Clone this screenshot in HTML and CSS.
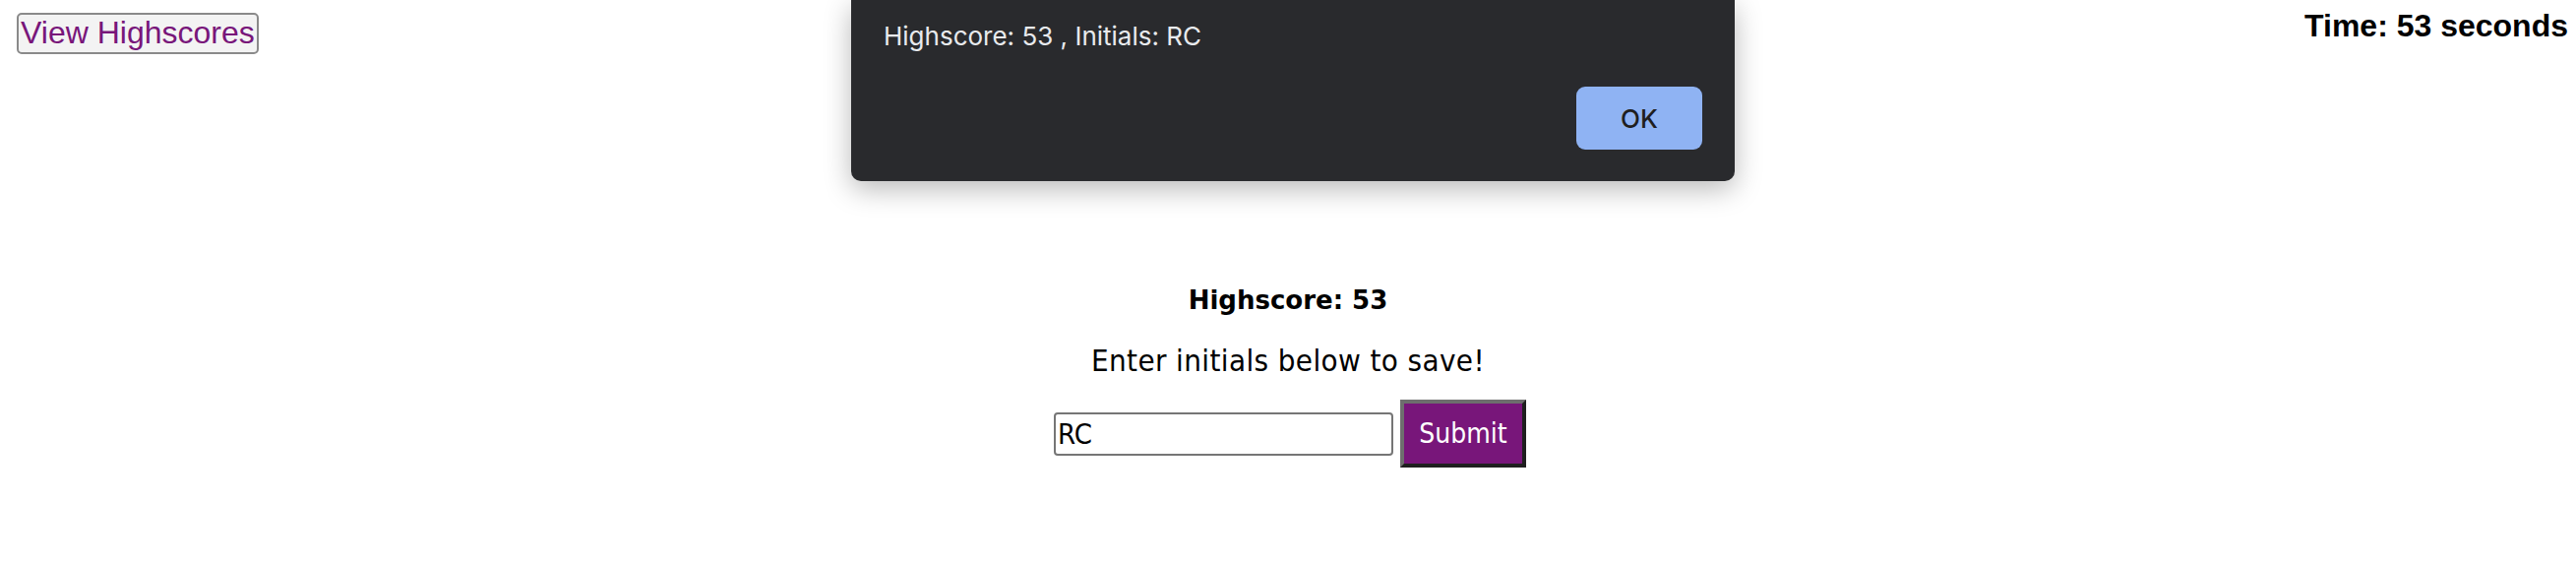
FILE: index.html
```html
<!DOCTYPE html>
<html lang="en">
<head>
<meta charset="utf-8">
<title>Quiz</title>
<link rel="stylesheet" href="styles.css">
</head>
<body>
  <header class="topbar">
    <button class="view-btn" type="button">View Highscores</button>
    <div class="timer">Time: 53 seconds</div>
  </header>

  <main class="result">
    <h3 class="score">Highscore: 53</h3>
    <p class="prompt">Enter initials below to save!</p>
    <form class="save-form">
      <input class="initials" type="text" value="RC">
      <button class="submit" type="button">Submit</button>
    </form>
  </main>

  <div class="alert">
    <p class="alert-msg">Highscore: 53 , Initials: RC</p>
    <div class="alert-actions">
      <button class="ok-btn" type="button">OK</button>
    </div>
  </div>
</body>
</html>
```

FILE: styles.css
```css
html, body {
  margin: 0;
  padding: 0;
  background: #ffffff;
}

body {
  margin: 8px;
  font-family: "DejaVu Sans Condensed", "DejaVu Sans", sans-serif;
  color: #000;
}

.topbar {
  display: flex;
  justify-content: space-between;
  align-items: flex-start;
  padding-left: 9px;
}

.view-btn {
  margin-top: 5px;
  font-family: "Liberation Sans", Arial, sans-serif;
  font-size: 32px;
  line-height: 36px;
  color: #78167a;
  background: #f3f3f3;
  border: 2px solid #8a8a8a;
  border-radius: 5px;
  padding: 0 2px 2px;
  cursor: pointer;
}

.timer {
  font-family: "Liberation Sans", Arial, sans-serif;
  font-weight: bold;
  font-size: 32px;
  line-height: 37px;
}

.result {
  display: flex;
  flex-direction: column;
  align-items: center;
  padding-top: 235px;
}

.score {
  margin: 0;
  font-family: "DejaVu Sans", sans-serif;
  font-weight: bold;
  font-size: 26px;
  line-height: 30px;
}

.prompt {
  margin: 28px 0 0;
  font-size: 31px;
  line-height: 36px;
  letter-spacing: 0.4px;
}

.save-form {
  margin-top: 22px;
  display: flex;
  align-items: center;
  gap: 7px;
  padding-left: 4px;
}

.initials {
  box-sizing: border-box;
  width: 345px;
  height: 44px;
  border: 2px solid #767676;
  border-radius: 4px;
  padding: 0 2px;
  font-family: "DejaVu Sans Condensed", "DejaVu Sans", sans-serif;
  font-size: 29px;
  color: #000;
  outline: none;
}

.submit {
  box-sizing: border-box;
  width: 128px;
  height: 69px;
  border: 4px solid;
  border-color: #6e6e6e #1f1f1f #1f1f1f #6e6e6e;
  background: #78167a;
  color: #ffffff;
  font-family: "DejaVu Sans Condensed", "DejaVu Sans", sans-serif;
  font-size: 28px;
  padding: 0;
  cursor: pointer;
}

.alert {
  position: absolute;
  top: 0;
  left: calc(50% - 444px);
  width: 898px;
  box-sizing: border-box;
  padding: 21px 33px 32px;
  background: #292a2d;
  border-radius: 0 0 10px 10px;
  box-shadow: 0 8px 28px rgba(0, 0, 0, 0.28);
  font-family: Inter, "Noto Sans", sans-serif;
}

.alert-msg {
  margin: 0;
  color: #e8eaed;
  font-size: 26px;
  line-height: 32px;
}

.alert-actions {
  display: flex;
  justify-content: flex-end;
  margin-top: 35px;
}

.ok-btn {
  width: 128px;
  height: 64px;
  border: none;
  border-radius: 9px;
  background: #8fb3f3;
  color: #1f1f1f;
  font-family: Inter, "Noto Sans", sans-serif;
  font-size: 26px;
  font-weight: 500;
  cursor: pointer;
}
```
